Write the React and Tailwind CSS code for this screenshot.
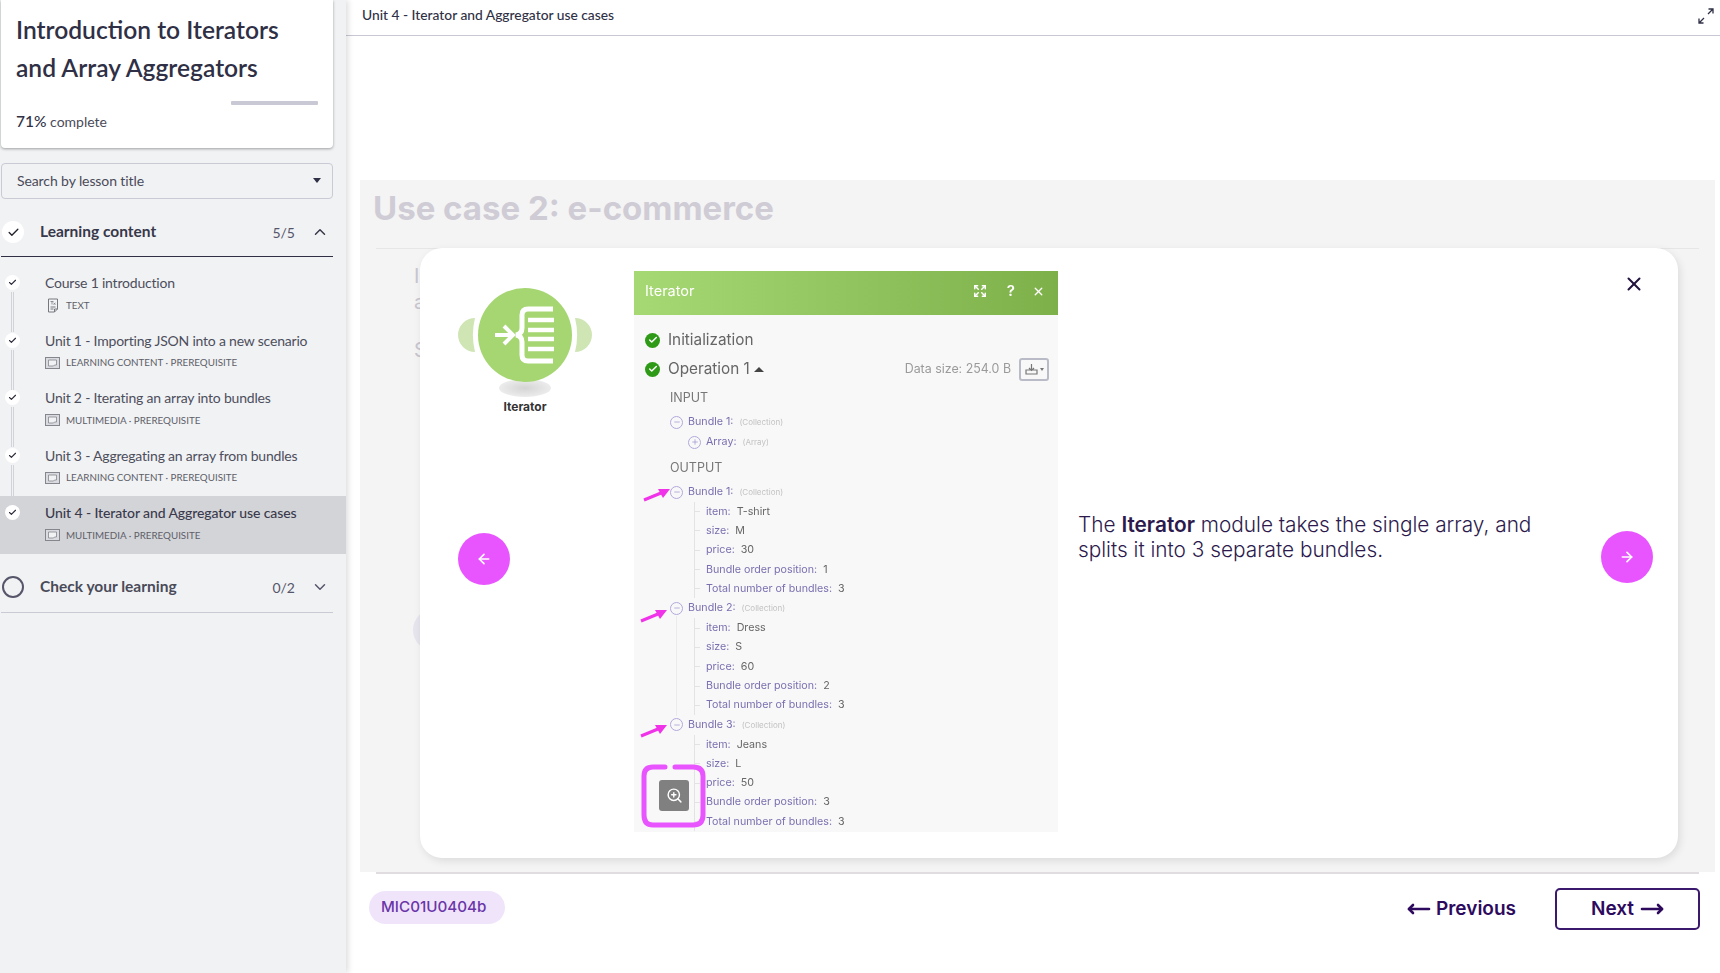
import { ChevronDown, ChevronUp, Check, X, ArrowLeft, ArrowRight, MoveLeft, MoveRight, ZoomIn, Plus, Minus, Expand } from 'lucide-react'

const lessons = [
  { title: 'Course 1 introduction', meta: 'TEXT', doc: true },
  { title: 'Unit 1 - Importing JSON into a new scenario', meta: 'LEARNING CONTENT · PREREQUISITE' },
  { title: 'Unit 2 - Iterating an array into bundles', meta: 'MULTIMEDIA · PREREQUISITE' },
  { title: 'Unit 3 - Aggregating an array from bundles', meta: 'LEARNING CONTENT · PREREQUISITE' },
  { title: 'Unit 4 - Iterator and Aggregator use cases', meta: 'MULTIMEDIA · PREREQUISITE', active: true },
]

const bundles = [
  { name: 'Bundle 1:', item: 'T-shirt', size: 'M', price: '30', pos: '1' },
  { name: 'Bundle 2:', item: 'Dress', size: 'S', price: '60', pos: '2' },
  { name: 'Bundle 3:', item: 'Jeans', size: 'L', price: '50', pos: '3' },
]

const DocIcon = () => (
  <svg width="14" height="15" viewBox="0 0 14 15" fill="none" stroke="#77787f" strokeWidth="1">
    <path d="M2.5 1h9v10l-3 3h-6z" />
    <path d="M8.5 14v-3h3M4.5 9h5M4.5 11h3" />
    <path d="M4.5 3.500h3M6 3.500v3M7.500 5l2 1.500M9.500 5l-2 1.500" strokeWidth="0.8" />
  </svg>
)

const SlideIcon = () => (
  <svg width="15" height="12" viewBox="0 0 15 12" fill="none">
    <rect x="0.500" y="0.500" width="14" height="11" fill="#dadbe0" stroke="#85868d" />
    <path d="M3.500 3h8v5h-2l-1 1h-5z" fill="#f1f2f4" stroke="#85868d" strokeWidth="0.8" />
  </svg>
)

const LessonRow = ({ lesson, last }) => (
  <div className={`relative h-[57.5px] pl-[45px] pt-[7px] ${lesson.active ? 'bg-[#d3d4d8]' : ''}`}>
    <div className="absolute left-[5px] top-[9px] flex h-[15px] w-[15px] items-center justify-center rounded-full bg-white">
      <Check size={9} strokeWidth={3} className="text-[#2a2a3a]" />
    </div>
    {!last && <div className="absolute left-[11px] top-[26px] h-[40px] w-[3px] border-x border-[#d2d3d8]" />}
    <div className={`h-[20px] text-[14px] leading-[20px] ${lesson.active ? 'font-medium tracking-[-0.1px] text-[#3a3a4c]' : 'tracking-[-0.2px] text-[#4d4e5c]'}`}>{lesson.title}</div>
    <div className="mt-[2px] flex h-[20px] items-center gap-[6px] text-[9.800px] text-[#5d5e68]">
      <span className="flex w-[15px] justify-center">{lesson.doc ? <DocIcon /> : <SlideIcon />}</span>
      <span>{lesson.meta}</span>
    </div>
  </div>
)

const Sidebar = () => (
  <aside className="relative z-10 w-[346px] shrink-0 bg-[#f1f2f4] font-['Lato',sans-serif] shadow-[2px_0_6px_rgba(0,0,0,0.14)]">
    <div className="ml-px h-[148px] w-[332px] rounded-b bg-white px-[15px] pt-[11px] shadow-[0_1px_3px_rgba(0,0,0,0.35)]">
      <h1 className="text-[24.600px] font-semibold leading-[37.500px] text-[#2f3045]">Introduction to Iterators and Array Aggregators</h1>
      <div className="mt-[15px] flex justify-end">
        <div className="h-[4px] w-[87px] rounded-[1px] bg-[#c8c9d4]" />
      </div>
      <div className="mt-[6px] text-[14px] leading-[20px] text-[#4a4b59]"><span className="text-[15.500px] font-medium text-[#2f3045]">71%</span> complete</div>
    </div>
    <div className="ml-px mt-[15px] flex h-[36px] w-[332px] items-center justify-between rounded border border-[#c9cad4] pb-[2px] pl-[15px] pr-[11px] text-[14px] tracking-[-0.1px] text-[#4a4b59]">
      <span>Search by lesson title</span>
      <span className="h-0 w-0 border-x-[4px] border-t-[5px] border-x-transparent border-t-[#2f3045]" />
    </div>
    <div className="ml-px mt-[15px] flex h-[43px] w-[332px] items-center border-b border-[#2f3045] pb-[6px] pl-[1px] pr-[4px]">
      <div className="flex h-[22px] w-[22px] items-center justify-center rounded-full bg-white">
        <Check size={13} strokeWidth={2.500} className="text-[#23232f]" />
      </div>
      <span className="ml-[16px] flex-1 text-[15.500px] font-bold text-[#37384a]">Learning content</span>
      <span className="text-[14px] text-[#55566a]">5/5</span>
      <ChevronUp size={18} className="ml-[16px] text-[#37384a]" />
    </div>
    <div className="mt-[9px]">
      {lessons.map((lesson, i) => (
        <LessonRow key={lesson.title} lesson={lesson} last={i === lessons.length - 1} />
      ))}
    </div>
    <div className="ml-px flex h-[59px] w-[332px] items-center border-b border-[#c9cad4] pl-[1px] pr-[4px] pt-[9px]">
      <div className="h-[22px] w-[22px] rounded-full border-2 border-[#55566a]" />
      <span className="ml-[16px] flex-1 text-[15.500px] font-bold text-[#4a4b59]">Check your learning</span>
      <span className="text-[14px] text-[#55566a]">0/2</span>
      <ChevronDown size={18} className="ml-[16px] text-[#55566a]" />
    </div>
  </aside>
)

const IteratorLogo = () => (
  <div className="w-[140px] shrink-0 pt-[14px]">
    <svg width="140" height="112" viewBox="0 0 140 112" fill="none">
      <defs>
        <radialGradient id="shade">
          <stop offset="0%" stopColor="#d4d4d4" />
          <stop offset="100%" stopColor="#ececec" />
        </radialGradient>
      </defs>
      <path d="M20 33A17 17 0 0 0 20 67A70 70 0 0 1 20 33Z" fill="#cfe6b4" />
      <path d="M120 33A17 17 0 0 1 120 67A70 70 0 0 0 120 33Z" fill="#cfe6b4" />
      <ellipse cx="70" cy="103" rx="26" ry="9" fill="url(#shade)" />
      <circle cx="70" cy="50" r="47" fill="#a5d672" />
      <path d="M98 24H73Q67 24 67 30V43Q67 49 61 50Q67 51 67 57V70Q67 76 73 76H98" stroke="#fff" strokeWidth="5" />
      <path d="M73 35H99M73 45H99M73 54H99M73 64H99" stroke="#fff" strokeWidth="4.500" />
      <path d="M40 50H58M49 41L58 50L49 59" stroke="#fff" strokeWidth="4" />
    </svg>
    <div className="mt-[3px] text-center font-['Inter',sans-serif] text-[12px] font-bold leading-[14px] text-[#333]">Iterator</div>
  </div>
)

const TreeToggle = ({ plus }) => (
  <span className="flex h-[13px] w-[13px] shrink-0 items-center justify-center rounded-full border border-[#b3a8dc] text-[#9a8dce]">
    {plus ? <Plus size={8} /> : <Minus size={8} />}
  </span>
)

const TreeLeaf = ({ label, value }) => (
  <div className="flex h-[19.300px] items-center">
    <span className="mr-[6px] h-px w-[5px] shrink-0 bg-[#e3e3e3]" />
    <span className="text-[#7b6fb0]">{label}</span>
    <span className="ml-[6px] text-[#666]">{value}</span>
  </div>
)

const BundleTree = ({ bundle }) => (
  <div>
    <div className="flex h-[20px] items-center text-[10.700px]">
      <span className="ml-[36px]"><TreeToggle /></span>
      <span className="ml-[5px] text-[#7b6fb0]">{bundle.name}</span>
      <span className="ml-[6px] text-[8px] text-[#c2c2c2]">(Collection)</span>
    </div>
    <div className="ml-[60px] border-l border-[#e3e3e3] text-[10.700px]">
      <TreeLeaf label="item:" value={bundle.item} />
      <TreeLeaf label="size:" value={bundle.size} />
      <TreeLeaf label="price:" value={bundle.price} />
      <TreeLeaf label="Bundle order position:" value={bundle.pos} />
      <TreeLeaf label="Total number of bundles:" value="3" />
    </div>
  </div>
)

const PinkArrow = ({ className }) => (
  <svg width="28" height="16" viewBox="0 0 28 16" className={`absolute ${className}`}>
    <path d="M1 14L18 7" stroke="#f032e8" strokeWidth="3" />
    <path d="M15 3L27 3L20 12Z" fill="#f032e8" />
  </svg>
)

const GreenCheck = () => (
  <span className="flex h-[15px] w-[15px] shrink-0 items-center justify-center rounded-full bg-[#2f9a17]">
    <Check size={10} strokeWidth={3.500} className="text-white" />
  </span>
)

const ModuleShot = () => (
  <div className="relative h-[561px] w-[424px] shrink-0 overflow-hidden bg-[#f8f8f8] font-['Inter',sans-serif] blur-[0.3px]">
    <div className="flex h-[44px] items-center bg-gradient-to-r from-[#a6d873] to-[#7eb04a] pb-[4px] pl-[11px] pr-[13px] text-white">
      <span className="flex-1 text-[14.500px]">Iterator</span>
      <Expand size={14} strokeWidth={2.500} />
      <span className="ml-[20px] text-[15px] font-semibold">?</span>
      <X size={13} strokeWidth={2.500} className="ml-[17px]" />
    </div>
    <div className="mt-[13px] flex h-[24px] items-center gap-[8px] pl-[11px] text-[15.300px] text-[#666]">
      <GreenCheck />
      <span>Initialization</span>
    </div>
    <div className="mt-[5px] flex h-[24px] items-center pl-[11px] pr-[9px] text-[15.300px] text-[#666]">
      <GreenCheck />
      <span className="ml-[8px]">Operation 1</span>
      <span className="ml-[4px] h-0 w-0 border-x-[5px] border-b-[5px] border-x-transparent border-b-[#444]" />
      <span className="ml-auto mr-[8px] text-[12.400px] text-[#9a9a9a]">Data size: 254.0 B</span>
      <span className="flex h-[23px] w-[30px] items-center justify-center gap-[2px] rounded-[3px] border-2 border-[#b9bcc6] text-[#777]">
        <svg width="13" height="12" viewBox="0 0 13 12" fill="none" stroke="#777" strokeWidth="1.200">
          <path d="M1 7h11v4H1zM6.500 1v6M4 5l2.500 2.500L9 5" />
        </svg>
        <span className="h-0 w-0 border-x-[2.500px] border-t-[3px] border-x-transparent border-t-[#777]" />
      </span>
    </div>
    <div className="mt-[7px] h-[20px] pl-[36px] text-[12.500px] leading-[20px] text-[#777]">INPUT</div>
    <div className="mt-[4px] flex h-[20px] items-center pl-[36px] text-[10.700px]">
      <TreeToggle />
      <span className="ml-[5px] text-[#7b6fb0]">Bundle 1:</span>
      <span className="ml-[6px] text-[8px] text-[#c2c2c2]">(Collection)</span>
    </div>
    <div className="flex h-[20px] items-center pl-[54px] text-[10.700px]">
      <TreeToggle plus />
      <span className="ml-[5px] text-[#7b6fb0]">Array:</span>
      <span className="ml-[6px] text-[8px] text-[#c2c2c2]">(Array)</span>
    </div>
    <div className="mt-[6px] h-[20px] pl-[36px] text-[12.500px] leading-[20px] text-[#777]">OUTPUT</div>
    <div className="mt-[4px] flex flex-col">
      {bundles.map((bundle) => (
        <BundleTree key={bundle.name} bundle={bundle} />
      ))}
    </div>
    <div className="absolute left-[42px] top-[345px] h-[100px] w-px bg-[#ebebeb]" />
    <PinkArrow className="left-[9px] top-[215px]" />
    <PinkArrow className="left-[6px] top-[336px]" />
    <PinkArrow className="left-[6px] top-[451px]" />
    <svg width="66" height="64" viewBox="0 0 66 64" fill="none" className="absolute left-[7px] top-[493px]">
      <path d="M24 3H12Q3 3 3 12V51Q3 61 12 61H52Q62 61 62 51V12Q62 3 52 3H34" stroke="#e855ff" strokeWidth="5" strokeLinecap="round" />
    </svg>
    <div className="absolute left-[25px] top-[509px] flex h-[31px] w-[30px] items-center justify-center rounded-[3px] bg-[#808080]">
      <ZoomIn size={17} className="text-white" />
    </div>
  </div>
)

const RoundNav = ({ className, children }) => (
  <button className={`absolute flex h-[52px] w-[52px] items-center justify-center rounded-full bg-[#e855ff] text-white ${className}`}>
    {children}
  </button>
)

const SlideModal = () => (
  <div className="absolute left-[60px] top-[68px] flex h-[610px] w-[1258px] rounded-[22px] bg-white pl-[35px] pt-[23px] shadow-[2px_3px_8px_rgba(0,0,0,0.1)]">
    <IteratorLogo />
    <div className="ml-[39px]"><ModuleShot /></div>
    <p className="ml-[20px] mt-[241px] w-[480px] font-['Inter',sans-serif] text-[20.800px] font-light leading-[25px] text-[#2c1a4d]">
      The <b className="font-semibold">Iterator</b> module takes the single array, and splits it into 3 separate bundles.
    </p>
    <X size={22} strokeWidth={2.200} className="absolute left-[1203px] top-[25px] text-[#22143f]" />
    <RoundNav className="left-[38px] top-[285px]"><ArrowLeft size={16} strokeWidth={2.500} /></RoundNav>
    <RoundNav className="left-[1181px] top-[283px]"><ArrowRight size={16} strokeWidth={2.500} /></RoundNav>
  </div>
)

const Main = () => (
  <main className="flex min-w-0 flex-1 flex-col font-['Inter',sans-serif]">
    <header className="flex h-[36px] shrink-0 items-center justify-between border-b border-[#c8c8d4] pb-[4px] pl-[16px] pr-[6px] font-['Lato',sans-serif]">
      <span className="text-[13.800px] font-medium text-[#2f3045]">Unit 4 - Iterator and Aggregator use cases</span>
      <svg width="16" height="16" viewBox="0 0 16 16" fill="none" stroke="#2f3045" strokeWidth="1.300">
        <path d="M10 6L15 1M10.500 1H15V5.500M6 10L1 15M5.500 15H1V10.500" />
      </svg>
    </header>
    <section className="relative ml-[14px] mr-[5px] mt-[144px] h-[692px] shrink-0 overflow-hidden bg-[#f4f4f4]">
      <h2 className="pl-[13px] pt-[6px] text-[33px] font-bold leading-[44px] text-[#cfccd6]">Use case 2: e-commerce</h2>
      <div className="mx-[16px] mt-[18px] h-px bg-[#e6e6e6]" />
      <div className="pl-[54px] pt-[14px] text-[20px] leading-[26px] text-[#c9c6d0]">
        <p>I</p>
        <p>a</p>
        <p className="mt-[22px]">S</p>
      </div>
      <div className="ml-[53px] mt-[246px] h-[42px] w-[42px] rounded-full bg-[#e6e4ec]" />
      <SlideModal />
    </section>
    <div className="ml-[30px] mr-[21px] h-[2px] shrink-0 bg-[#e0dce0]" />
    <footer className="flex shrink-0 items-start justify-between pl-[23px] pr-[20px] pt-[14px]">
      <span className="mt-[3px] flex h-[33px] w-[136px] items-center rounded-full bg-[#f0e4fb] pl-[12px] text-[15.200px] font-medium text-[#6a35a8]">MIC01U0404b</span>
      <div className="flex items-center">
        <button className="flex items-center gap-[5px] text-[19px] font-semibold text-[#2d0a5e]">
          <MoveLeft size={24} strokeWidth={2.600} />
          Previous
        </button>
        <button className="ml-[39px] flex h-[42px] w-[145px] items-center justify-center gap-[6px] rounded-[5px] border-2 border-[#3b1a6d] text-[19px] font-semibold text-[#2d0a5e]">
          Next
          <MoveRight size={24} strokeWidth={2.600} />
        </button>
      </div>
    </footer>
  </main>
)

export default function App() {
  return (
    <div className="flex h-[973px] w-[1720px] overflow-hidden bg-white">
      <Sidebar />
      <Main />
    </div>
  )
}
